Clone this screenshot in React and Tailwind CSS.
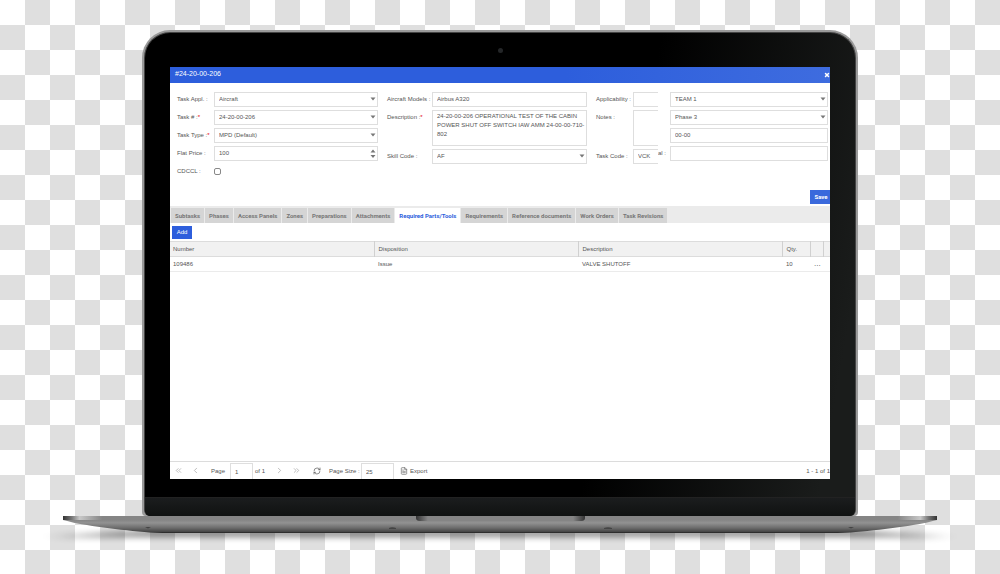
import { ChevronLeft, ChevronRight, ChevronsLeft, ChevronsRight, FileText, RefreshCw, X } from "lucide-react";

const TABS = [
    "Subtasks",
    "Phases",
    "Access Panels",
    "Zones",
    "Preparations",
    "Attachments",
    "Required Parts/Tools",
    "Requirements",
    "Reference documents",
    "Work Orders",
    "Task Revisions",
];

const ROWS = [{ number: "109486", disposition: "Issue", description: "VALVE SHUTOFF", qty: 10 }];

const DESCRIPTION = "24-20-00-206 OPERATIONAL TEST OF THE CABIN\nPOWER SHUT OFF SWITCH IAW AMM 24-00-00-710-\n802";

const BOX = "block h-[15px] w-full min-w-0 appearance-none rounded-none border border-[#dedede] bg-white px-1 pb-[2px] text-[#555] outline-none";

function Field({ id, label, required, labelWidth = "w-[37px]", children }) {
    return (
        <div className="flex">
            <label htmlFor={id} className={`${labelWidth} shrink-0 leading-[15px] whitespace-nowrap`}>
                {label}
                {required && <span className="text-red-600">*</span>}
            </label>
            <div className="relative min-w-0 flex-1">{children}</div>
        </div>
    );
}

function Select({ id, value, ariaLabel }) {
    return (
        <>
            <select id={id} aria-label={ariaLabel} className={BOX} defaultValue={value}>
                <option>{value}</option>
            </select>
            <svg viewBox="0 0 6 4" className="pointer-events-none absolute top-[5px] right-[2px] h-1 w-[6px] fill-[#777]">
                <path d="M0.5 0.5h5L3 3.5z" />
            </svg>
        </>
    );
}

function TaskForm() {
    return (
        <form className="flex pt-[9px] pr-[2px] pl-[7px]">
            <div className="flex flex-[201] flex-col gap-[3px]">
                <Field id="appl" label="Task Appl. :"><Select id="appl" value="Aircraft" /></Field>
                <Field id="task" label="Task # :" required><Select id="task" value="24-20-00-206" /></Field>
                <Field id="type" label="Task Type :" required><Select id="type" value="MPD (Default)" /></Field>
                <Field id="price" label="Flat Price :">
                    <input id="price" className={BOX} defaultValue="100" />
                    <svg viewBox="0 0 6 10" className="pointer-events-none absolute top-[3px] right-[2px] h-[10px] w-[6px] fill-[#777]">
                        <path d="M0.5 3.5h5L3 0.5zM0.5 6h5L3 9z" />
                    </svg>
                </Field>
                <Field id="cdccl" label="CDCCL :">
                    <input id="cdccl" type="checkbox" className="mt-1 block h-[7px] w-[7px] appearance-none rounded-[2px] border border-[#888] bg-white" />
                </Field>
            </div>
            <div className="ml-[9px] flex flex-[200] flex-col gap-[3px]">
                <Field id="models" label="Aircraft Models :" labelWidth="w-[45px]">
                    <input id="models" className={BOX} defaultValue="Airbus A320" />
                </Field>
                <Field id="description" label="Description :" required labelWidth="w-[45px]">
                    <textarea
                        id="description"
                        className="block h-9 w-full resize-none overflow-hidden border border-[#dedede] py-px pl-1 leading-[9px] whitespace-pre text-[#555] outline-none"
                        defaultValue={DESCRIPTION}
                    />
                </Field>
                <Field id="skill" label="Skill Code :" labelWidth="w-[45px]"><Select id="skill" value="AF" /></Field>
            </div>
            <div className="ml-[9px] flex w-[62px] flex-col gap-[3px]">
                <Field id="applicability" label="Applicability :">
                    <input id="applicability" className={`${BOX} border-r-0`} />
                </Field>
                <Field id="notes" label="Notes :">
                    <textarea id="notes" className="block h-9 w-full resize-none border border-r-0 border-[#dedede] outline-none" />
                </Field>
                <Field id="code" label="Task Code :">
                    <input id="code" className={`${BOX} border-r-0`} defaultValue="VCK" />
                </Field>
            </div>
            <div className="flex flex-[170] flex-col gap-[3px]">
                <Field id="team" labelWidth="w-3"><Select id="team" ariaLabel="Team" value="TEAM 1" /></Field>
                <Field id="phase" labelWidth="w-3"><Select id="phase" ariaLabel="Phase" value="Phase 3" /></Field>
                <Field id="ata" labelWidth="w-3"><input id="ata" aria-label="Chapter" className={BOX} defaultValue="00-00" /></Field>
                <Field id="manual" label="al :" labelWidth="w-3"><input id="manual" className={BOX} /></Field>
            </div>
        </form>
    );
}

function PartsTable() {
    const cell = "truncate text-left font-normal";
    return (
        <table className="w-full table-fixed border-collapse">
            <colgroup>
                <col />
                <col />
                <col />
                <col className="w-7" />
                <col className="w-[13px]" />
                <col className="w-[7px]" />
            </colgroup>
            <thead>
                <tr className="h-[15px] border-y border-[#dcdcdc] bg-[#f1f1f1]">
                    <th className={`${cell} px-[3px]`}>Number</th>
                    <th className={`${cell} border-l border-[#d0d0d0] px-1`}>Disposition</th>
                    <th className={`${cell} border-l border-[#d0d0d0] px-1`}>Description</th>
                    <th className={`${cell} border-l border-[#d0d0d0] px-1`}>Qty.</th>
                    <th className="border-l border-[#d0d0d0]"></th>
                    <th className="border-l border-[#d0d0d0]"></th>
                </tr>
            </thead>
            <tbody>
                {ROWS.map((row) => (
                    <tr key={row.number} className="h-[15px] border-b border-[#ebebeb]">
                        <td className={`${cell} px-[3px]`}>{row.number}</td>
                        <td className={`${cell} px-1`}>{row.disposition}</td>
                        <td className={`${cell} px-1`}>{row.description}</td>
                        <td className={`${cell} px-1`}>{row.qty}</td>
                        <td><button aria-label="Row menu" className="block w-full pl-1 text-left text-[8px] leading-[8px]">...</button></td>
                        <td></td>
                    </tr>
                ))}
            </tbody>
        </table>
    );
}

function Pager() {
    const icon = "h-[9px] w-[9px] text-[#aaa]";
    const box = "h-[17px] border border-b-0 border-[#dedede] bg-white px-1 text-[#555] outline-none";
    return (
        <footer className="flex h-[18px] items-center overflow-hidden border-t border-[#dcdcdc] pl-1 whitespace-nowrap">
            <button aria-label="First page"><ChevronsLeft className={icon} /></button>
            <button aria-label="Previous page" className="ml-2"><ChevronLeft className={icon} /></button>
            <label htmlFor="page" className="ml-[11px] w-[19px]">Page</label>
            <input id="page" className={`${box} mt-[2px] w-[23px]`} defaultValue="1" />
            <span className="ml-[2px] w-[20px]">of 1</span>
            <button aria-label="Next page"><ChevronRight className={icon} /></button>
            <button aria-label="Last page" className="ml-2"><ChevronsRight className={icon} /></button>
            <button aria-label="Refresh" className="ml-3"><RefreshCw className="h-2 w-2 text-[#555]" /></button>
            <label htmlFor="size" className="ml-2 w-8">Page Size :</label>
            <input id="size" className={`${box} mt-[2px] w-[33px]`} defaultValue="25" />
            <button className="ml-[6px] flex items-center gap-[2px]">
                <FileText className="h-2 w-2 text-[#666]" />
                Export
            </button>
            <span className="ml-auto">1 - 1 of 1</span>
        </footer>
    );
}

function Screen() {
    return (
        <main className="flex flex-col overflow-hidden bg-white font-['Liberation_Sans',sans-serif] text-[6px] leading-[8px] text-[#555]">
            <header className="flex h-4 items-center justify-between bg-linear-to-r from-[#2d5edc] from-60% to-[#3e6cdf] pl-[5px] text-white">
                <h1 className="pb-[2px] text-[7px]">#24-20-00-206</h1>
                <button aria-label="Close"><X className="h-[6px] w-[6px]" strokeWidth={6} /></button>
            </header>
            <TaskForm />
            <div className="mt-[11px] mb-[2px] flex justify-end">
                <button className="h-[14px] w-5 bg-[#3a69dc] pl-[2px] font-[Roboto,sans-serif] font-bold text-white">Save</button>
            </div>
            <nav className="flex gap-px bg-[#ebebeb] pt-[2px] pl-px">
                {TABS.map((tab) => (
                    <button
                        key={tab}
                        className={`h-[15px] px-1 font-[Roboto,sans-serif] font-bold whitespace-nowrap ${tab === "Required Parts/Tools" ? "bg-white text-[#2d5edc]" : "bg-[#d5d5d5] text-[#777]"}`}
                    >
                        {tab}
                    </button>
                ))}
            </nav>
            <div className="px-[2px] pt-[3px] pb-[2px]">
                <button className="block h-[13px] w-5 bg-[#2d5edc] pb-px text-white">Add</button>
            </div>
            <div className="min-h-[220px]">
                <PartsTable />
            </div>
            <Pager />
        </main>
    );
}

function Base() {
    return (
        <svg viewBox="0 0 1000 58" preserveAspectRatio="none" className="block h-[58px] w-full" aria-hidden="true">
            <defs>
                <linearGradient id="body" x1="0" y1="0" x2="0" y2="1">
                    <stop offset="0" stopColor="#858585" />
                    <stop offset=".22" stopColor="#929292" />
                    <stop offset=".6" stopColor="#6d6d6d" />
                    <stop offset=".93" stopColor="#424242" />
                    <stop offset="1" stopColor="#151515" />
                </linearGradient>
                <linearGradient id="edge">
                    <stop offset="0" stopColor="#333" />
                    <stop offset=".01" stopColor="#777" />
                    <stop offset=".019" stopColor="#c8c8c8" />
                    <stop offset=".045" stopColor="#858585" />
                    <stop offset=".955" stopColor="#858585" />
                    <stop offset=".981" stopColor="#c8c8c8" />
                    <stop offset=".99" stopColor="#777" />
                    <stop offset="1" stopColor="#333" />
                </linearGradient>
                <linearGradient id="notch">
                    <stop offset="0" stopColor="#333" />
                    <stop offset=".07" stopColor="#858585" />
                    <stop offset=".93" stopColor="#858585" />
                    <stop offset="1" stopColor="#333" />
                </linearGradient>
                <filter id="soft" x="-10%" y="-100%" width="120%" height="300%">
                    <feGaussianBlur stdDeviation="10 3" />
                </filter>
            </defs>
            <path d="M50 21L150 14H850L950 21L850 21H150z" fill="#000" opacity=".45" filter="url(#soft)" />
            <path d="M63 4H937C915 10 880 14 850 16.500Q840 17 820 17H180Q160 17 150 16.500C120 14 85 10 63 4z" fill="url(#body)" />
            <rect x="63" width="874" height="4" fill="url(#edge)" />
            <path d="M416 0H585V2Q585 5 581 5H420Q416 5 416 2z" fill="url(#notch)" />
            <path d="M145 11h6l-3 1.500zM389 12q3-1.500 7 0v1h-7zM604 12q4-1.500 8 0v1h-8zM848 11h6l-3 1.500z" fill="#444" />
        </svg>
    );
}

export default function App() {
    return (
        <div className="min-h-screen overflow-hidden bg-[conic-gradient(#dfdfdf_25%,#fff_0_50%,#dfdfdf_0_75%,#fff_0)] bg-size-[50px_50px] pt-[30px]">
            <div className="px-[14.2%]">
                <div className="rounded-t-[28px] rounded-b-[4px] bg-[#9a9a9a] px-[2px] pt-[2px]">
                    <div className="overflow-hidden rounded-t-[26px] rounded-b-[6px] border border-b-0 border-[#444] bg-linear-[100deg] from-black from-65% to-[#1a1c1b] to-95%">
                        <div className="flex h-[34px] items-center justify-center">
                            <span className="h-[5px] w-[5px] rounded-full bg-[#242628]"></span>
                        </div>
                        <div className="px-[25px] pb-[18px]">
                            <Screen />
                        </div>
                        <div className="h-[19px] border-t border-[#222] bg-linear-to-b from-[#1b1d1e] to-[#101211]"></div>
                    </div>
                </div>
            </div>
            <Base />
        </div>
    );
}
